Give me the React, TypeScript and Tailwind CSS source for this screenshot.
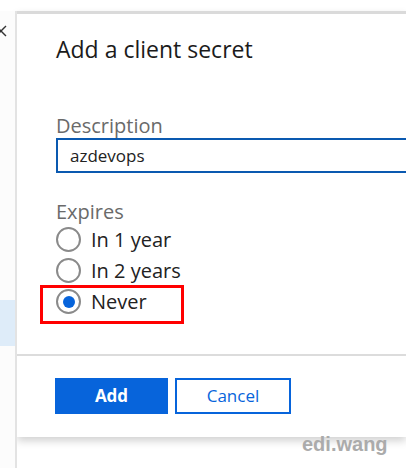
import React from "react";

const font = { fontFamily: '"Open Sans", "Noto Sans", sans-serif' };

function Radio({ label, checked }: { label: string; checked?: boolean }) {
  return (
    <label className="flex items-center h-[31px] gap-[10px]">
      <span className="w-[25px] h-[25px] rounded-full border-2 border-[#8a8a8a] flex items-center justify-center bg-white">
        {checked && <span className="w-[12px] h-[12px] rounded-full bg-[#0764db]" />}
      </span>
      <span className="text-[20px] text-[#222] leading-none">{label}</span>
    </label>
  );
}

export default function App() {
  return (
    <div className="w-[406px] h-[468px] bg-white overflow-hidden relative" style={font}>
      <div className="flex h-full pt-[11px]">
        {/* left blade strip */}
        <div className="w-[17px] shrink-0 border-r-2 border-[#e3e3e3] bg-[#fcfcfc] relative">
          <svg className="absolute left-[-5px] top-[14px]" width="12" height="12" viewBox="0 0 12 12">
            <path d="M1 1 L11 11 M11 1 L1 11" stroke="#333" strokeWidth="1.4" />
          </svg>
          <div className="mt-[289px] h-[46px] bg-[#deecf9]" />
        </div>

        {/* dialog */}
        <div className="flex-1 h-[426px] bg-white border-t-[3px] border-[#dadada] shadow-[0_4px_8px_rgba(0,0,0,0.18)] flex flex-col">
          <div className="pl-[39px] flex-1">
            <h1 className="mt-[20px] text-[23px] leading-[31px] text-[#1b1b1b]">Add a client secret</h1>

            <div className="mt-[49px] text-[20px] leading-[24px] text-[#6a6a6a]">Description</div>
            <div className="mt-[0px] h-[35px] border-2 border-[#0a59b0] border-r-0 flex items-center pl-[12px] text-[17px] text-[#222]">
              azdevops
            </div>

            <div className="mt-[27px] text-[20px] leading-[24px] text-[#6a6a6a]">Expires</div>
            <div className="flex flex-col">
              <Radio label="In 1 year" />
              <Radio label="In 2 years" />
              <div className="relative">
                <Radio label="Never" checked />
                <div className="absolute left-[-16px] top-[-1px] w-[144px] h-[39px] border-[3px] border-[#ff0000]" />
              </div>
            </div>
          </div>

          <div className="border-t-2 border-[#dcdcdc] h-[83px] pl-[38px] flex items-start pt-[22px] gap-[7px]">
            <button className="w-[113px] h-[36px] bg-[#0764db] text-white font-bold text-[17px]">Add</button>
            <button className="w-[116px] h-[36px] border-2 border-[#0764db] text-[#0764db] font-medium text-[17px]">Cancel</button>
          </div>
        </div>
      </div>

      <div
        className="absolute left-[302px] top-[429px] text-[20px] font-bold text-[#ababab]"
        style={{ fontFamily: '"Liberation Sans", Arial, sans-serif' }}
      >
        edi.wang
      </div>
    </div>
  );
}
